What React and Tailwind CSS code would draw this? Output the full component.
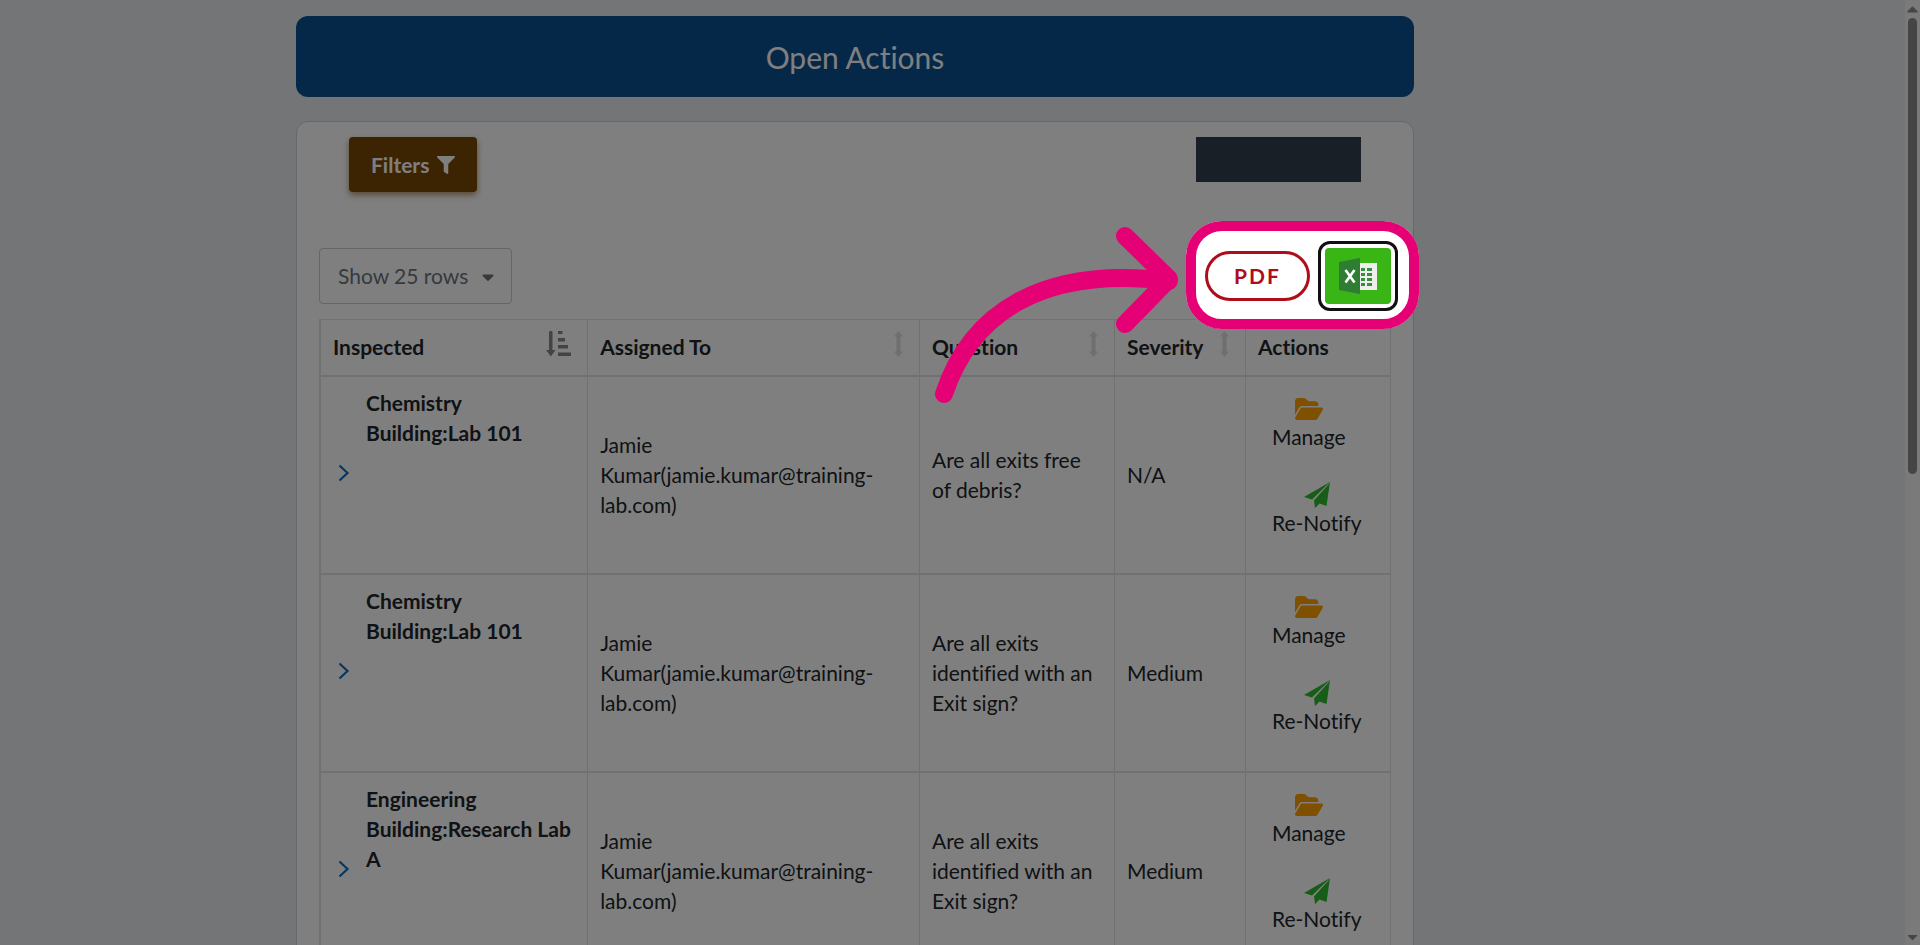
import React from 'react';
import { FaCaretDown, FaCaretUp, FaFilter } from 'react-icons/fa';
import { FaFolderOpen } from 'react-icons/fa6';

const assignee = 'Jamie Kumar(jamie.kumar@training-lab.com)';

const actions = [
    { id: 1, inspected: 'Chemistry Building:Lab 101', question: 'Are all exits free of debris?', severity: 'N/A' },
    { id: 2, inspected: 'Chemistry Building:Lab 101', question: 'Are all exits identified with an Exit sign?', severity: 'Medium' },
    { id: 3, inspected: 'Engineering Building:Research Lab A', question: 'Are all exits identified with an Exit sign?', severity: 'Medium' }
];

const columns = [
    { label: 'Inspected', width: 'w-1/4', sort: 'active' },
    { label: 'Assigned To', width: 'w-[31%]', sort: 'idle' },
    { label: 'Question', width: '', sort: 'idle' },
    { label: 'Severity', width: 'w-[131px]', sort: 'idle' },
    { label: 'Actions', width: 'w-[145px]' }
];

const SortActiveIcon = () => (
    <svg viewBox="0 0 25 26" className="w-[25px] h-[26px] mb-1.5 text-[#888888]" fill="currentColor" aria-hidden="true">
        <path d="M3 1a1 1 0 0 1 1-1h1.500a1 1 0 0 1 1 1v18H9.500L4.800 25.500L0 19H3z" />
        <path d="M12 0h4.500v3H12zM12 7h7v3.500H12zM12 14h10v3.500H12zM12 21.500h13V25H12z" />
    </svg>
);

const SortIdleIcon = () => (
    <svg viewBox="0 0 9 26" className="w-[9px] h-[26px] mb-1.5 text-[#dfdfdf]" fill="currentColor" aria-hidden="true">
        <path d="M4.500 0L9 5.500H6.500v15H9L4.500 26L0 20.500h2.500v-15H0z" />
    </svg>
);

const SendIcon = () => (
    <svg viewBox="0 0 26 26" className="w-[26px] h-[26px] text-[#2eb82e]" fill="currentColor" aria-hidden="true">
        <path d="M0 15L26 0L8 17.500Z" />
        <path d="M10 18.500L24 3L26 0L22.500 24L15.500 21.500L11 26Z" />
    </svg>
);

const ExcelIcon = () => (
    <svg viewBox="0 0 38 36" className="w-[38px] h-9" aria-hidden="true">
        <path d="M20 5h18v27H20z" fill="#eeeeee" />
        <path d="M22 10h4v3h-4zM28 10h5v3h-5zM22 15h4v3h-4zM28 15h5v3h-5zM22 20h4v3h-4zM28 20h5v3h-5zM22 25h4v3h-4zM28 25h5v3h-5z" fill="#388e3c" />
        <path d="M21 0v36L0 32V4z" fill="#2e7d32" />
        <path d="M6.500 12l9 12.500M15.500 12l-9 12.500" stroke="#ffffff" strokeWidth="2.600" />
    </svg>
);

const Spotlight = () => (
    <div className="absolute -top-5 -bottom-[18px] -left-[19px] -right-[21px] border-10 border-[#e50075] rounded-[36px] shadow-[0_0_0_3000px_rgba(0,0,0,0.5)] pointer-events-none">
        <svg viewBox="0 0 250 184" className="absolute -left-[266px] -top-[11px] max-w-none w-[250px] h-[184px]" aria-hidden="true">
            <g fill="none" stroke="#e50075" strokeWidth="18" strokeLinecap="round" strokeLinejoin="round">
                <path d="M14 174C40 95 110 45 239 61" />
                <path d="M195 16L239 59L195 104" />
            </g>
        </svg>
    </div>
);

const Toolbar = () => (
    <div className="flex items-center justify-between h-14">
        <div className="relative">
            <select aria-label="Rows per page" className="appearance-none h-14 w-[193px] pl-[18px] border border-[#cccccc] rounded text-[#6c757d]">
                <option>Show 25 rows</option>
            </select>
            <FaCaretDown className="absolute right-[18px] top-[19px] h-5 w-3 text-[#6c757d] pointer-events-none" />
        </div>
        <div className="relative flex items-center gap-2 -mr-[7px]">
            <button className="h-[50px] w-[105px] border-3 border-[#b00d1a] rounded-full font-bold tracking-widest text-[#b00d1a]">
                PDF
            </button>
            <button aria-label="Export to Excel" className="flex items-center justify-center h-[70px] w-20 border-3 border-[#101010] rounded-xl">
                <span className="flex items-center justify-center h-14 w-[66px] rounded bg-[#3ab516]">
                    <ExcelIcon />
                </span>
            </button>
            <Spotlight />
        </div>
    </div>
);

const ActionRow = ({ action }) => (
    <tr className="h-[198px] border-b-2 border-[#dee2e6]">
        <td className="border-r border-[#dee2e6] align-top pt-[11px] pl-[17px] pr-2">
            <div className="flex gap-4">
                <button aria-label="Expand row" className="mt-[75px] h-5 text-[#0b6fc2]">
                    <svg viewBox="0 0 12 18" className="w-3 h-[18px]" aria-hidden="true">
                        <path d="M1.500 1.500L9.500 9L1.500 16.500" fill="none" stroke="currentColor" strokeWidth="2.200" />
                    </svg>
                </button>
                <span className="font-bold">{action.inspected}</span>
            </div>
        </td>
        <td className="border-r border-[#dee2e6] px-3">{assignee}</td>
        <td className="border-r border-[#dee2e6] px-3">{action.question}</td>
        <td className="border-r border-[#dee2e6] px-3">{action.severity}</td>
        <td className="align-top pt-[19px] pl-[26px]">
            <div className="flex flex-col items-start gap-[30px]">
                <button className="flex flex-col items-center">
                    <FaFolderOpen className="h-[26px] w-7 text-[#ffa000]" />
                    Manage
                </button>
                <button className="flex flex-col items-center">
                    <SendIcon />
                    Re-Notify
                </button>
            </div>
        </td>
    </tr>
);

const ActionsTable = () => (
    <table className="w-full table-fixed border-collapse border border-l-2 border-[#dee2e6] text-left">
        <thead>
            <tr className="h-14 border-b-2 border-[#dee2e6]">
                {columns.map(col => (
                    <th key={col.label} className={`${col.width} border-r border-[#dee2e6] pl-3 pr-4 font-bold`}>
                        <div className="flex items-center justify-between">
                            {col.label}
                            {col.sort === 'active' && <SortActiveIcon />}
                            {col.sort === 'idle' && <SortIdleIcon />}
                        </div>
                    </th>
                ))}
            </tr>
        </thead>
        <tbody>
            {actions.map(action => <ActionRow key={action.id} action={action} />)}
        </tbody>
    </table>
);

const Scrollbar = () => (
    <div className="flex flex-col items-center w-[15px] shrink-0 bg-[#f4f4f4] text-[#8a8a8a]">
        <FaCaretUp className="h-[18px] w-[15px]" />
        <div className="w-[9px] h-[456px] rounded-full bg-[#8a8a8a]" />
        <div className="grow" />
        <FaCaretDown className="h-4 w-[15px]" />
    </div>
);

const App = () => {
    return (
        <div className="flex h-screen overflow-hidden bg-[#e9ebee] font-[Lato,sans-serif] text-[21px] leading-[30px] text-[#212529] [font-variant-ligatures:none]">
            <main className="grow pl-74 pt-4">
                <div className="w-full max-w-[1118px]">
                    <h1 className="flex items-center justify-center h-[81px] rounded-xl bg-[#0a5090] text-3xl text-white">
                        Open Actions
                    </h1>
                    <section className="mt-6 px-[22px] pt-[15px] bg-white border border-[#d0d0d0] rounded-xl">
                        <div className="flex items-start justify-between px-[30px] mb-14">
                            <button className="flex items-center gap-2 h-[55px] px-[22px] rounded bg-[#784804] font-bold text-white shadow-[0_3px_6px_rgba(120,72,4,0.6)]">
                                Filters
                                <FaFilter className="h-[18px] w-[18px]" />
                            </button>
                            <div className="h-[45px] w-[165px] bg-[#323f4d]" />
                        </div>
                        <Toolbar />
                        <div className="mt-[15px]">
                            <ActionsTable />
                        </div>
                    </section>
                </div>
            </main>
            <Scrollbar />
        </div>
    );
};

export default App;
